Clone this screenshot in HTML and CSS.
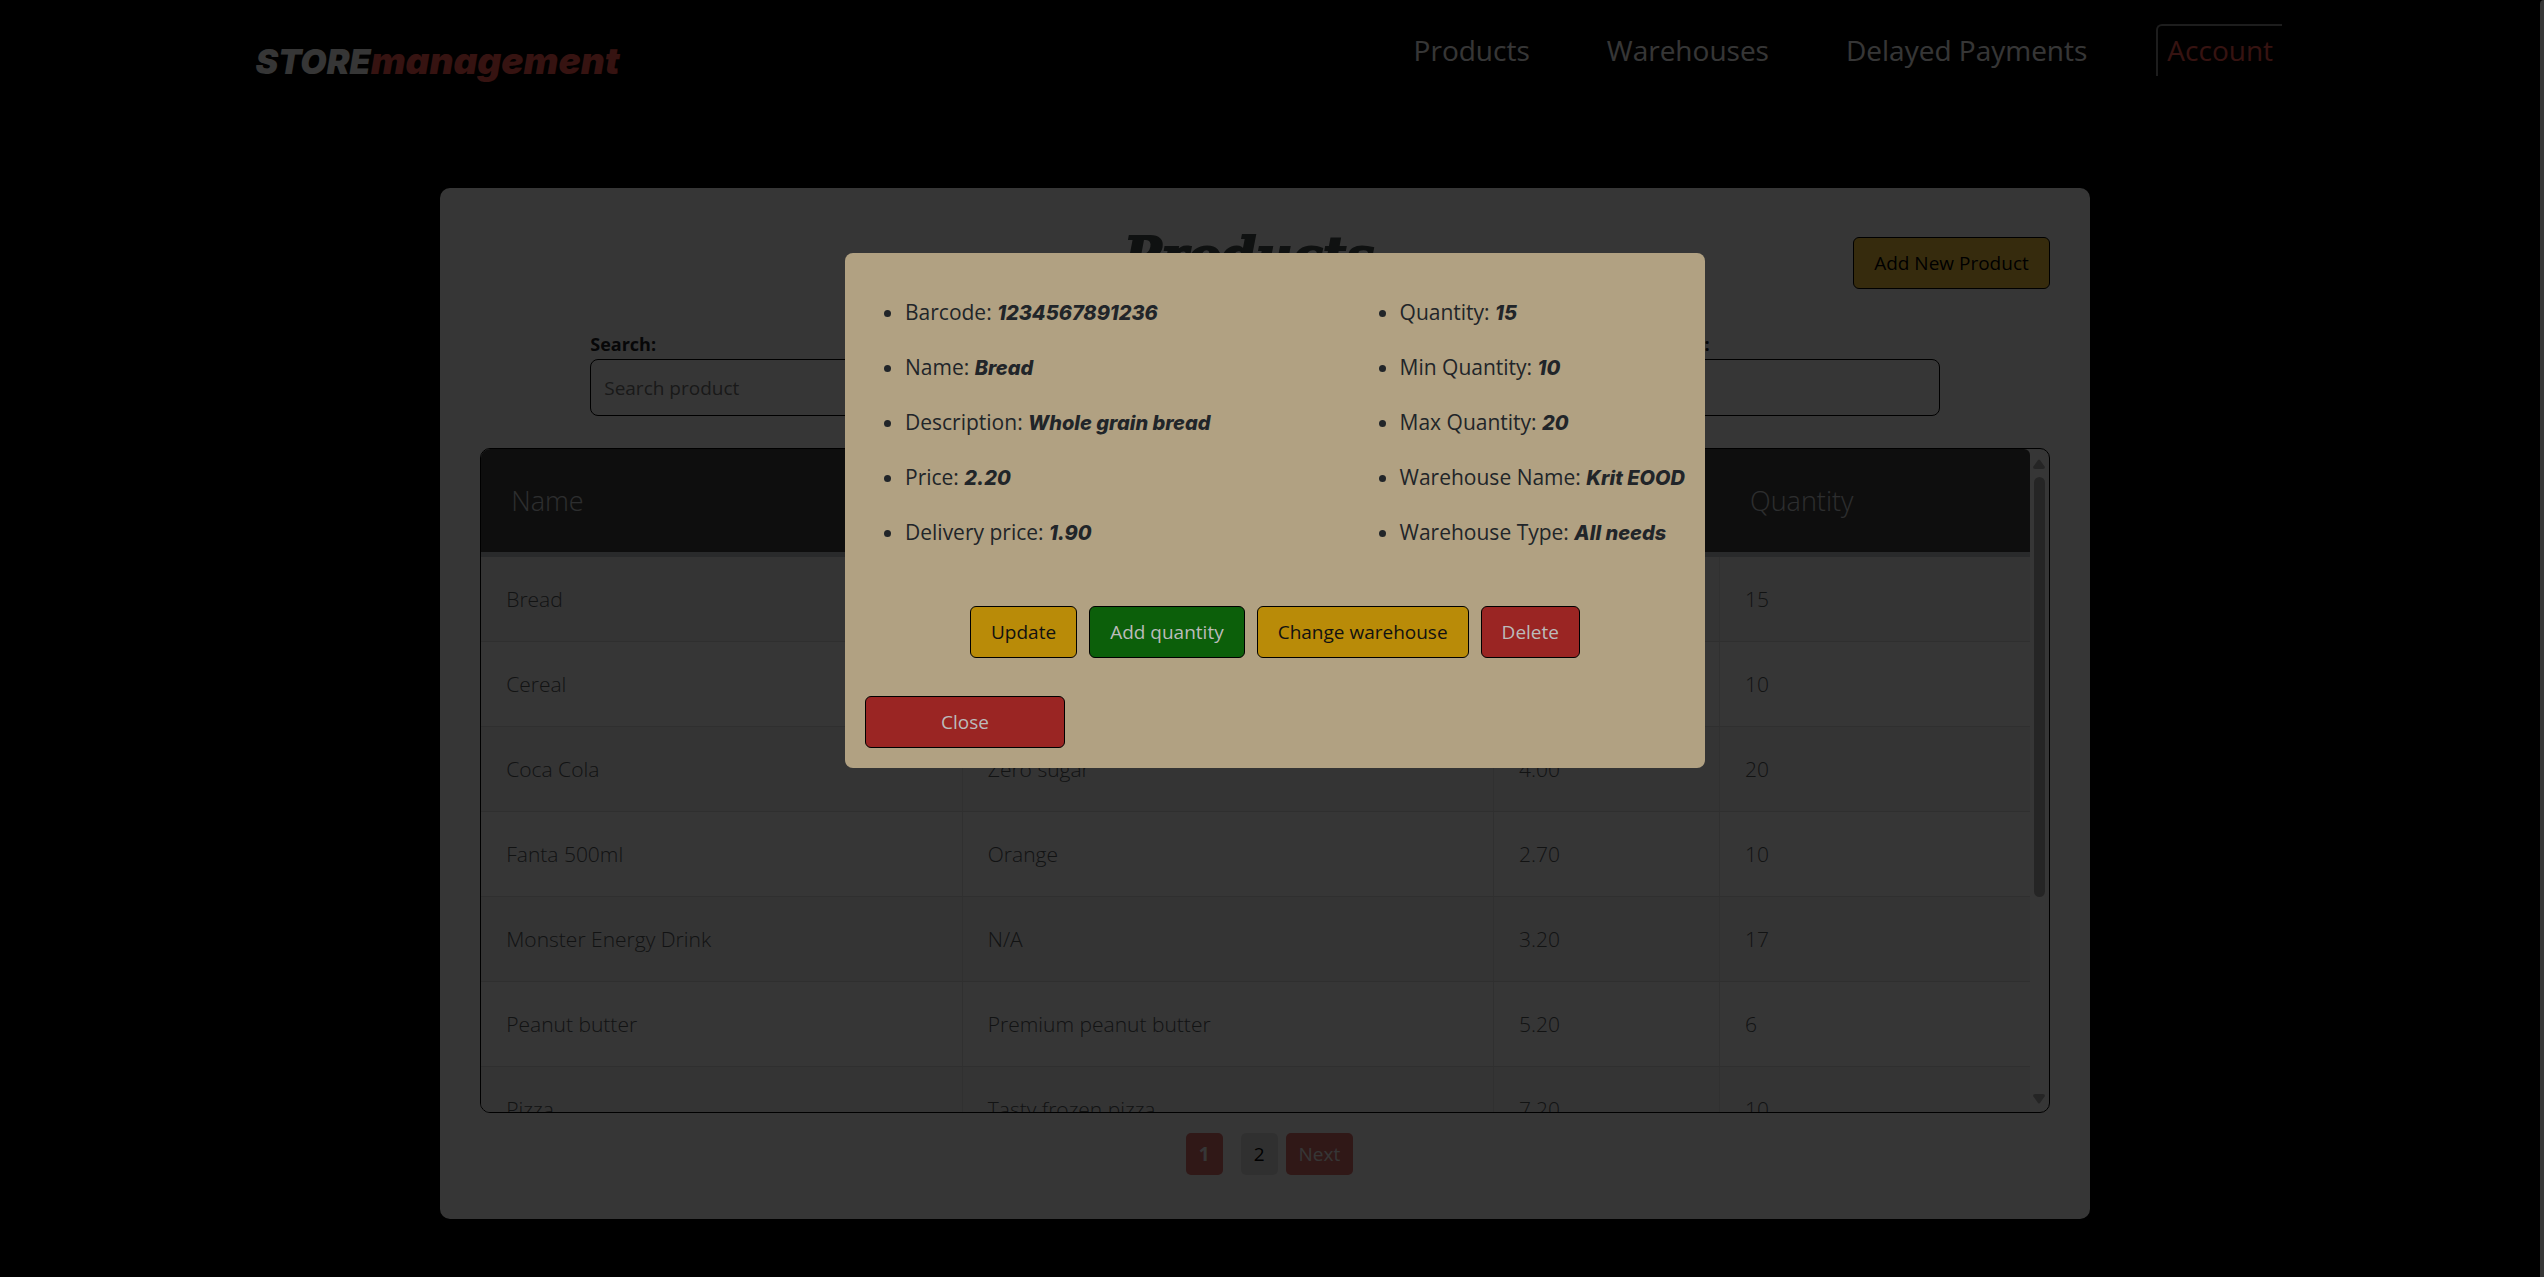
FILE: index.html
```html
<!DOCTYPE html>
<html lang="en">
<head>
<meta charset="utf-8">
<title>Products - Store management</title>
<link rel="stylesheet" href="styles.css">
</head>
<body>
<header class="site-header">
  <a class="logo" href="#"><span class="logo-store">STORE</span><span class="logo-management">management</span></a>
  <nav class="site-nav">
    <a href="#">Products</a>
    <a href="#">Warehouses</a>
    <a href="#">Delayed Payments</a>
    <a class="account" href="#">Account</a>
  </nav>
</header>
<main class="card">
  <div class="card-head">
    <h1>Products</h1>
    <button class="btn btn-warning" type="button">Add New Product</button>
  </div>
  <form class="filters">
    <div class="field"><label for="search">Search:</label><input id="search" type="text" placeholder="Search product"></div>
    <div class="field"><label for="category">Sort by:</label><input id="category" type="text"></div>
    <div class="field"><label for="warehouse">Filter by warehouse:</label><input id="warehouse" type="text"></div>
  </form>
  <div class="table-frame">
    <div class="table-scroll">
      <table>
        <colgroup><col class="col-name"><col class="col-description"><col class="col-price"><col class="col-quantity"></colgroup>
        <thead><tr><th>Name</th><th>Description</th><th>Price</th><th>Quantity</th></tr></thead>
        <tbody>
          <tr><td>Bread</td><td>Whole grain bread</td><td>2.20</td><td>15</td></tr>
          <tr><td>Cereal</td><td>N/A</td><td>4.50</td><td>10</td></tr>
          <tr><td>Coca Cola</td><td>Zero sugar</td><td>4.00</td><td>20</td></tr>
          <tr><td>Fanta 500ml</td><td>Orange</td><td>2.70</td><td>10</td></tr>
          <tr><td>Monster Energy Drink</td><td>N/A</td><td>3.20</td><td>17</td></tr>
          <tr><td>Peanut butter</td><td>Premium peanut butter</td><td>5.20</td><td>6</td></tr>
          <tr><td>Pizza</td><td>Tasty frozen pizza</td><td>7.20</td><td>10</td></tr>
        </tbody>
      </table>
    </div>
    <div class="scrollbar" aria-hidden="true">
      <svg width="14" height="10" viewBox="0 0 14 10"><path d="M6 1 Q7 0 8 1 L13 8 Q13 10 11 10 L3 10 Q1 10 1 8 Z"/></svg>
      <div class="scroll-track"><div class="scroll-thumb"></div></div>
      <svg width="14" height="10" viewBox="0 0 14 10"><path d="M6 9 Q7 10 8 9 L13 2 Q13 0 11 0 L3 0 Q1 0 1 2 Z"/></svg>
    </div>
  </div>
  <nav class="pagination">
    <a class="page current" href="#">1</a>
    <a class="page" href="#">2</a>
    <a class="page next" href="#">Next</a>
  </nav>
</main>
<div class="overlay">
  <section class="modal" role="dialog" aria-label="Product details">
    <div class="details">
      <ul>
        <li>Barcode: <b>1234567891236</b></li>
        <li>Name: <b>Bread</b></li>
        <li>Description: <b>Whole grain bread</b></li>
        <li>Price: <b>2.20</b></li>
        <li>Delivery price: <b>1.90</b></li>
      </ul>
      <ul>
        <li>Quantity: <b>15</b></li>
        <li>Min Quantity: <b>10</b></li>
        <li>Max Quantity: <b>20</b></li>
        <li>Warehouse Name: <b>Krit EOOD</b></li>
        <li>Warehouse Type: <b>All needs</b></li>
      </ul>
    </div>
    <div class="actions">
      <button class="btn update" type="button">Update</button>
      <button class="btn add" type="button">Add quantity</button>
      <button class="btn update" type="button">Change warehouse</button>
      <button class="btn danger" type="button">Delete</button>
    </div>
    <button class="btn danger close" type="button">Close</button>
  </section>
</div>
<div class="page-scroll" aria-hidden="true"></div>
</body>
</html>
```

FILE: styles.css
```css
* { box-sizing: border-box; }
html { overflow: hidden; background: #000; }
body {
  margin: 0;
  min-height: 100vh;
  padding-right: 14px;
  background: #000;
  color: #212529;
  font: 20px/30px "Open Sans", "Noto Sans", sans-serif;
}
a { text-decoration: none; }

.site-header {
  display: flex;
  justify-content: space-between;
  align-items: flex-start;
  height: 188px;
  padding: 24px 9.8% 0 10.1%;
}
.logo {
  margin-top: 17px;
  font: italic 900 37px/40px Inter, sans-serif;
}
.logo-store { color: #fff; font-size: 34px; }
.logo-management { color: #fe5a50; }
.site-nav { display: flex; gap: 61px; font-size: 28px; line-height: 48px; }
.site-nav a { color: #fff; padding: 2px 8px; }
.site-nav .account {
  color: #fe5a50;
  padding: 0 9px;
  border-top: 2px solid #888;
  border-left: 2px solid #888;
  border-radius: 6px 0 0 0;
}

.card {
  width: 65.2%;
  margin: 0 auto;
  padding: 40px 40px 44px;
  background: #fff;
  border-radius: 10px;
}
.card-head {
  display: grid;
  grid-template-columns: 1fr auto 1fr;
  height: 101px;
}
.card-head h1 {
  grid-column: 2;
  margin: 0;
  padding-right: 32px;
  color: #4a5150;
  font: italic 900 50px/56px "DejaVu Serif", serif;
  -webkit-text-stroke: 2px #4a5150;
}
.card-head .btn { justify-self: end; margin-top: 9px; }

.btn {
  height: 52px;
  padding: 0 20px;
  border: 1px solid #000;
  border-radius: 6px;
  font: 19px/30px "Open Sans", sans-serif;
}
.btn-warning { background: #ffcc40; color: #000; }

.filters { display: flex; gap: 55px; padding: 0 110px; }
.field { flex: 1; display: flex; flex-direction: column; }
.field label { font-size: 18px; font-weight: 700; line-height: 30px; }
.field input {
  height: 57px;
  padding: 0 13px;
  border: 1px solid #000;
  border-radius: 8px;
  background: #fff;
  font: 19px/30px "Open Sans", sans-serif;
}
.field input::placeholder { color: #777; }

.table-frame {
  display: flex;
  height: 665px;
  margin-top: 32px;
  border: 1px solid #000;
  border-radius: 10px;
  overflow: hidden;
}
.table-scroll { flex: 1; overflow: hidden; border-radius: 0 6px 0 0; }
table { width: 100%; table-layout: fixed; border-collapse: separate; border-spacing: 0; font-size: 21px; font-weight: 300; }
.col-name { width: 31.1%; }
.col-description { width: 34.3%; }
.col-price { width: 14.6%; }
th {
  height: 108px;
  padding: 0 30px;
  background: #444;
  color: #d5d8dc;
  border-bottom: 5px solid #c3c5ca;
  font-size: 27px;
  font-weight: 300;
  text-align: left;
}
td { height: 85px; padding: 0 25px; color: #55595d; border-right: 1px solid #e0e0e0; border-bottom: 1px solid #dedede; }
td:last-child { border-right: 0; }
tbody tr:nth-child(odd) { background: #f3f3f3; }
tbody tr:nth-child(even) { background: #fcfcfc; }

.scrollbar { width: 19px; display: flex; flex-direction: column; align-items: center; padding: 10px 0 8px; gap: 8px; fill: #b0b0b0; }
.scroll-track { flex: 1; }
.scroll-thumb { width: 11px; height: 420px; border-radius: 6px; background: #b0b0b0; }

.pagination { display: flex; justify-content: center; gap: 8px; margin-top: 20px; padding-left: 9px; font-size: 19px; }
.page { padding: 0 13px; line-height: 42px; border-radius: 5px; background: #e4e4e4; color: #000; }
.current, .next { background: #e0706c; color: #fff; }
.current { margin-right: 10px; font-weight: 700; }

.overlay {
  position: fixed;
  inset: 0;
  padding: 253px 0 0 6px;
  background: rgba(0, 0, 0, .79);
}
.modal {
  width: 860px;
  margin: 0 auto;
  padding: 32px 20px 20px;
  background: #b1a182;
  border-radius: 8px;
}
.details { display: flex; justify-content: space-between; font-size: 21px; line-height: 55px; }
.details ul { margin: 0; padding-left: 40px; }
.details b { font: italic 800 20px/30px Inter, sans-serif; }
.actions { display: flex; justify-content: center; gap: 12px; margin: 46px 0 38px; }
.update { background: #b98b08; color: #111; }
.add { background: #0c5f0a; color: #bbb; }
.danger { background: #9a2523; color: #bbb; }
.close { display: block; width: 200px; }

.page-scroll {
  position: fixed;
  inset: 0 0 0 auto;
  width: 4px;
  background: #363636;
  border-radius: 4px 0 0 0;
}
```
